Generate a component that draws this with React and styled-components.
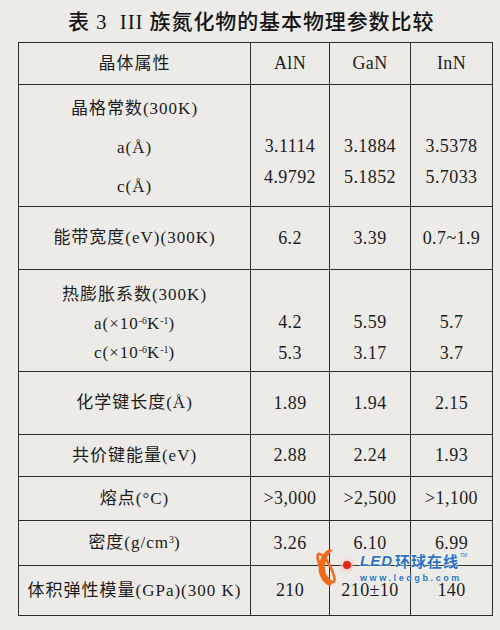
import React from 'react'
import styled, { createGlobalStyle } from 'styled-components'

const GlobalStyle = createGlobalStyle`
    html, body {
        margin: 0;
        padding: 0;
        background: #ecebe8;
    }
`

const Page = styled.div`
    position: relative;
    width: 500px;
    height: 630px;
    background: #ecebe8;
    color: #1c1c1c;
    font-family: "Liberation Serif", "Noto Sans CJK SC", serif;
    overflow: hidden;
`

const Title = styled.h1`
    margin: 0;
    padding: 9px 0 0 68px;
    height: 42px;
    box-sizing: border-box;
    font-size: 21px;
    line-height: 26px;
    font-weight: 500;
    letter-spacing: 0.9px;
    white-space: pre;
    color: #151515;
`

const Table = styled.table`
    margin-left: 18px;
    width: 474px;
    border-collapse: collapse;
    table-layout: fixed;
    font-size: 17px;
    letter-spacing: 1px;
`

const Row = styled.tr`
    height: ${p => p.$h}px;
`

const Cell = styled.td`
    border: 1.5px solid #2e2e2e;
    padding: ${p => (p.$top != null ? `${p.$top}px 0 0` : '0')};
    text-align: center;
    vertical-align: ${p => (p.$top != null ? 'top' : 'middle')};
    line-height: ${p => p.$lh || 20}px;
    white-space: nowrap;
`

const Num = styled.span`
    font-size: 18px;
    letter-spacing: 0.4px;
`

const Line = styled.div``

const Sup = styled.sup`
    font-size: 0.58em;
    line-height: 0;
    vertical-align: 0;
    position: relative;
    top: -0.55em;
    letter-spacing: 0;
`

const Logo = styled.div`
    position: absolute;
    left: 316px;
    top: 547px;
    display: flex;
    gap: 24px;
`

const Dot = styled.span`
    position: absolute;
    left: 27px;
    top: 14px;
    width: 8px;
    height: 8px;
    border-radius: 50%;
    background: #e8231c;
    box-shadow: 0 0 4px 2px rgba(255, 200, 190, 0.9);
`

const LogoText = styled.div`
    display: flex;
    flex-direction: column;
    padding-top: 5px;
`

const Brand = styled.div`
    display: flex;
    align-items: flex-start;
    color: #2b72c8;
    font-size: 15px;
    line-height: 17px;
`

const Led = styled.span`
    font-family: "Liberation Sans", Arial, sans-serif;
    font-weight: 700;
    font-style: italic;
    letter-spacing: 1px;
    margin-right: 2px;
    text-shadow: 0 0 2px #fff, 0 0 2px #fff;
`

const Cn = styled.span`
    font-family: "Noto Sans CJK SC", sans-serif;
    font-weight: 700;
    letter-spacing: 1px;
    text-shadow: 0 0 2px #fff, 0 0 2px #fff;
`

const Tm = styled.span`
    font-family: "Liberation Sans", sans-serif;
    font-size: 5px;
    line-height: 6px;
    margin-left: 1px;
`

const Url = styled.div`
    margin-top: 4px;
    font-family: "Liberation Sans", Arial, sans-serif;
    font-weight: 700;
    font-size: 9px;
    line-height: 10px;
    letter-spacing: 2.6px;
    color: #2b72c8;
    text-shadow: 0 0 2px #fff;
`

const Swirl = () => (
    <svg width="20" height="40" viewBox="0 0 20 40">
        <path d="M13 2 C3 8 0 22 5 31 C8 36 11 38 14 39 L16 37 C11 31 8 24 9 17 C10 11 13 6 17 3 Z" fill="#f06a1c" />
        <ellipse cx="10" cy="21" rx="4.5" ry="16" transform="rotate(-28 10 21)" stroke="#f06a1c" strokeWidth="2.6" fill="none" />
    </svg>
)

const simpleRows = [
    { label: '化学键长度(Å)', h: 63, v: ['1.89', '1.94', '2.15'] },
    { label: '共价键能量(eV)', h: 42, v: ['2.88', '2.24', '1.93'] },
    { label: '熔点(°C)', h: 44, v: ['>3,000', '>2,500', '>1,100'] },
]

const App = () => (
    <Page>
        <GlobalStyle />
        <Title>{'表 3  III 族氮化物的基本物理参数比较'}</Title>
        <Table>
            <colgroup>
                <col style={{ width: 232 }} />
                <col style={{ width: 79 }} />
                <col style={{ width: 81 }} />
                <col style={{ width: 82 }} />
            </colgroup>
            <tbody>
                <Row $h={42}>
                    <Cell>晶体属性</Cell>
                    <Cell><Num>AlN</Num></Cell>
                    <Cell><Num>GaN</Num></Cell>
                    <Cell><Num>InN</Num></Cell>
                </Row>
                <Row $h={121}>
                    <Cell $top={4} $lh={39}>
                        <Line>晶格常数(300K)</Line>
                        <Line>a(Å)</Line>
                        <Line>c(Å)</Line>
                    </Cell>
                    {[['3.1114', '4.9792'], ['3.1884', '5.1852'], ['3.5378', '5.7033']].map((pair, i) => (
                        <Cell key={i} $top={46} $lh={30}>
                            <Line><Num>{pair[0]}</Num></Line>
                            <Line><Num>{pair[1]}</Num></Line>
                        </Cell>
                    ))}
                </Row>
                <Row $h={63}>
                    <Cell>能带宽度(eV)(300K)</Cell>
                    <Cell><Num>6.2</Num></Cell>
                    <Cell><Num>3.39</Num></Cell>
                    <Cell><Num>0.7~1.9</Num></Cell>
                </Row>
                <Row $h={102}>
                    <Cell $top={10} $lh={29}>
                        <Line>热膨胀系数(300K)</Line>
                        <Line>a(×10<Sup>-6</Sup>K<Sup>-1</Sup>)</Line>
                        <Line>c(×10<Sup>-6</Sup>K<Sup>-1</Sup>)</Line>
                    </Cell>
                    {[['4.2', '5.3'], ['5.59', '3.17'], ['5.7', '3.7']].map((pair, i) => (
                        <Cell key={i} $top={37} $lh={30}>
                            <Line><Num>{pair[0]}</Num></Line>
                            <Line><Num>{pair[1]}</Num></Line>
                        </Cell>
                    ))}
                </Row>
                {simpleRows.map(r => (
                    <Row key={r.label} $h={r.h}>
                        <Cell>{r.label}</Cell>
                        {r.v.map((v, i) => <Cell key={i}><Num>{v}</Num></Cell>)}
                    </Row>
                ))}
                <Row $h={45}>
                    <Cell>密度(g/cm<Sup>3</Sup>)</Cell>
                    <Cell><Num>3.26</Num></Cell>
                    <Cell><Num>6.10</Num></Cell>
                    <Cell><Num>6.99</Num></Cell>
                </Row>
                <Row $h={50}>
                    <Cell>体积弹性模量(GPa)(300 K)</Cell>
                    <Cell><Num>210</Num></Cell>
                    <Cell><Num>210±10</Num></Cell>
                    <Cell><Num>140</Num></Cell>
                </Row>
            </tbody>
        </Table>
        <Logo>
            <Swirl />
            <Dot />
            <LogoText>
                <Brand>
                    <Led>LED</Led>
                    <Cn>环球在线</Cn>
                    <Tm>TM</Tm>
                </Brand>
                <Url>www.ledgb.com</Url>
            </LogoText>
        </Logo>
    </Page>
)

export default App
